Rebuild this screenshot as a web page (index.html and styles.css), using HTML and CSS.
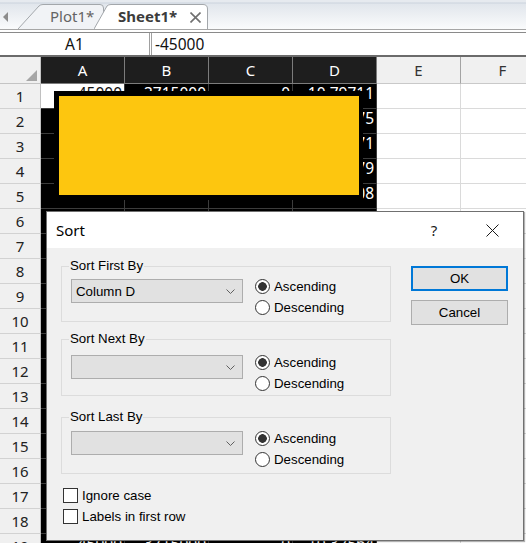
FILE: index.html
```html
<!DOCTYPE html>
<html>
<head>
<meta charset="utf-8">
<link rel="stylesheet" href="styles.css">
</head>
<body>
<div class="app">
  <div class="tabbar">
    <svg class="tab-arrow" width="18" height="25" viewBox="0 0 18 25"><polygon points="8,8 3,13 8,18" fill="#8c8c8c"/></svg>
    <div class="tab tab-plot">
      <svg class="tab-shape" width="86" height="25" viewBox="0 0 86 25"><path d="M0,25 L21,2 Q22.5,0.5 25,0.5 L82,0.5 Q85.5,0.5 85.5,4 L85.5,25" fill="#f1f3f6" stroke="#a3a7ab" stroke-width="1"/></svg>
      <span class="tab-label">Plot1*</span>
    </div>
    <div class="tab tab-sheet">
      <svg class="tab-shape" width="114" height="25" viewBox="0 0 114 25"><path d="M0,25 L13,2 Q14.5,0.5 17,0.5 L109,0.5 Q113.5,0.5 113.5,5 L113.5,25" fill="#ffffff" stroke="#a3a7ab" stroke-width="1"/></svg>
      <span class="tab-label">Sheet1*</span>
      <svg class="tab-close" width="11" height="11" viewBox="0 0 11 11"><path d="M0.5,0.5 L10.5,10.5 M10.5,0.5 L0.5,10.5" stroke="#707070" stroke-width="1.6"/></svg>
    </div>
  </div>
  <div class="tabsep"></div>
  <div class="formula">
    <div class="namebox">A1</div>
    <div class="fx">-45000</div>
  </div>
  <div class="sheet">
    <div class="corner"><svg width="11" height="11" viewBox="0 0 11 11"><polygon points="11,0 11,11 0,11" fill="#a6a6a6"/></svg></div>
    <div class="hd hd-sel">A</div><div class="hd hd-sel">B</div><div class="hd hd-sel">C</div><div class="hd hd-sel">D</div><div class="hd hd-plain">E</div><div class="hd hd-plain">F</div>

    <div class="rh">1</div><div class="c a1">-45000</div><div class="c">3715000</div><div class="c">0</div><div class="c">10.79711</div><div class="w"></div><div class="w"></div>
    <div class="rh">2</div><div class="c">-45000</div><div class="c">3715000</div><div class="c">0</div><div class="c">10.76875</div><div class="w"></div><div class="w"></div>
    <div class="rh">3</div><div class="c">-45000</div><div class="c">3715000</div><div class="c">0</div><div class="c">10.74171</div><div class="w"></div><div class="w"></div>
    <div class="rh">4</div><div class="c">-45000</div><div class="c">3715000</div><div class="c">0</div><div class="c">10.71279</div><div class="w"></div><div class="w"></div>
    <div class="rh">5</div><div class="c">-45000</div><div class="c">3715000</div><div class="c">0</div><div class="c">10.68408</div><div class="w"></div><div class="w"></div>
    <div class="rh">6</div><div class="c">-45000</div><div class="c">3715000</div><div class="c">0</div><div class="c">10.65529</div><div class="w"></div><div class="w"></div>
    <div class="rh">7</div><div class="c">-45000</div><div class="c">3715000</div><div class="c">0</div><div class="c">10.62683</div><div class="w"></div><div class="w"></div>
    <div class="rh">8</div><div class="c">-45000</div><div class="c">3715000</div><div class="c">0</div><div class="c">10.59792</div><div class="w"></div><div class="w"></div>
    <div class="rh">9</div><div class="c">-45000</div><div class="c">3715000</div><div class="c">0</div><div class="c">10.56954</div><div class="w"></div><div class="w"></div>
    <div class="rh">10</div><div class="c">-45000</div><div class="c">3715000</div><div class="c">0</div><div class="c">10.54061</div><div class="w"></div><div class="w"></div>
    <div class="rh">11</div><div class="c">-45000</div><div class="c">3715000</div><div class="c">0</div><div class="c">10.51217</div><div class="w"></div><div class="w"></div>
    <div class="rh">12</div><div class="c">-45000</div><div class="c">3715000</div><div class="c">0</div><div class="c">10.48338</div><div class="w"></div><div class="w"></div>
    <div class="rh">13</div><div class="c">-45000</div><div class="c">3715000</div><div class="c">0</div><div class="c">10.45462</div><div class="w"></div><div class="w"></div>
    <div class="rh">14</div><div class="c">-45000</div><div class="c">3715000</div><div class="c">0</div><div class="c">10.42581</div><div class="w"></div><div class="w"></div>
    <div class="rh">15</div><div class="c">-45000</div><div class="c">3715000</div><div class="c">0</div><div class="c">10.39717</div><div class="w"></div><div class="w"></div>
    <div class="rh">16</div><div class="c">-45000</div><div class="c">3715000</div><div class="c">0</div><div class="c">10.36824</div><div class="w"></div><div class="w"></div>
    <div class="rh">17</div><div class="c">-45000</div><div class="c">3715000</div><div class="c">0</div><div class="c">10.35412</div><div class="w"></div><div class="w"></div>
    <div class="rh">18</div><div class="c">-45000</div><div class="c">3715000</div><div class="c">0</div><div class="c">10.33987</div><div class="w"></div><div class="w"></div>
    <div class="rh">19</div><div class="c">-45000</div><div class="c">3715000</div><div class="c">0</div><div class="c">10.32564</div><div class="w"></div><div class="w"></div>
  </div>

  <div class="redact"></div>

  <div class="dialog">
    <div class="dlg-title">
      <span class="dlg-caption">Sort</span>
      <span class="dlg-help">?</span>
      <svg class="dlg-close" width="13" height="13" viewBox="0 0 13 13"><path d="M0.5,0.5 L12.5,12.5 M12.5,0.5 L0.5,12.5" stroke="#1a1a1a" stroke-width="1"/></svg>
    </div>
    <div class="dlg-body">
      <div class="dlg-main">
        <div class="group g1">
          <span class="group-label">Sort First By</span>
          <div class="combo"><span class="combo-text">Column D</span><svg class="chev" width="9" height="5" viewBox="0 0 9 5"><path d="M0.5,0.5 L4.5,4.5 L8.5,0.5" fill="none" stroke="#606060" stroke-width="1"/></svg></div>
          <div class="radios">
            <div class="radio-row"><span class="radio checked"></span>Ascending</div>
            <div class="radio-row"><span class="radio"></span>Descending</div>
          </div>
        </div>
        <div class="group g2">
          <span class="group-label">Sort Next By</span>
          <div class="combo"><span class="combo-text"></span><svg class="chev" width="9" height="5" viewBox="0 0 9 5"><path d="M0.5,0.5 L4.5,4.5 L8.5,0.5" fill="none" stroke="#606060" stroke-width="1"/></svg></div>
          <div class="radios">
            <div class="radio-row"><span class="radio checked"></span>Ascending</div>
            <div class="radio-row"><span class="radio"></span>Descending</div>
          </div>
        </div>
        <div class="group g3">
          <span class="group-label">Sort Last By</span>
          <div class="combo"><span class="combo-text"></span><svg class="chev" width="9" height="5" viewBox="0 0 9 5"><path d="M0.5,0.5 L4.5,4.5 L8.5,0.5" fill="none" stroke="#606060" stroke-width="1"/></svg></div>
          <div class="radios">
            <div class="radio-row"><span class="radio checked"></span>Ascending</div>
            <div class="radio-row"><span class="radio"></span>Descending</div>
          </div>
        </div>
        <div class="checks">
          <div class="check-row"><span class="checkbox"></span>Ignore case</div>
          <div class="check-row"><span class="checkbox"></span>Labels in first row</div>
        </div>
      </div>
      <div class="dlg-buttons">
        <div class="btn btn-default">OK</div>
        <div class="btn">Cancel</div>
      </div>
    </div>
  </div>
</div>
</body>
</html>
```

FILE: styles.css
```css
* { box-sizing: border-box; }
html, body { margin: 0; padding: 0; }
body {
  width: 526px;
  height: 543px;
  overflow: hidden;
  background: #fff;
  font-family: "Noto Sans", "Liberation Sans", sans-serif;
}
.app {
  position: relative;
  width: 526px;
  height: 543px;
  overflow: hidden;
}

/* ---------- tab bar ---------- */
.tabbar {
  height: 30px;
  display: flex;
  align-items: flex-end;
  border-bottom: 1px solid #a6a6a6;
  background: linear-gradient(#e6eaef 0, #e6eaef 2px, #cbd3dd 3px, #e1e6ec 4px, #fafbfc 100%);
}
.tab-arrow { flex: none; display: block; }
.tab {
  position: relative;
  height: 25px;
  display: flex;
  align-items: center;
  flex: none;
}
.tab-shape {
  position: absolute;
  left: 0;
  top: 0;
  display: block;
}
.tab-label {
  position: relative;
  font-size: 15px;
  line-height: 25px;
}
.tab-plot { width: 86px; padding-left: 32px; }
.tab-plot .tab-label { color: #646464; }
.tab-sheet { width: 114px; margin-left: -10px; padding-left: 24px; }
.tab-sheet .tab-label { color: #3c3c3c; font-weight: bold; }
.tab-close { position: relative; margin-left: auto; margin-right: 7px; margin-top: 2px; display: block; }

.tabsep {
  height: 3px;
  background: #fff;
  border-bottom: 1px solid #8a8a8a;
}

/* ---------- formula bar ---------- */
.formula {
  height: 22px;
  display: flex;
  font-size: 15.5px;
  color: #111;
}
.namebox {
  width: 150px;
  border-right: 1px solid #a0a0a0;
  text-align: center;
  line-height: 22px;
}
.fx {
  flex: 1;
  margin-left: 1px;
  border-left: 1px solid #a0a0a0;
  padding-left: 3px;
  line-height: 22px;
}

/* ---------- sheet grid ---------- */
.sheet {
  height: 488px;
  overflow: hidden;
  border-top: 2px solid #6b6b6b;
  display: grid;
  grid-template-columns: 41px repeat(6, 84px);
  grid-template-rows: 27px;
  grid-auto-rows: 25px;
}
.corner {
  background: #f0f0f0;
  border-right: 1px solid #c4c4c4;
  border-bottom: 1px solid #c4c4c4;
  display: flex;
  justify-content: flex-end;
  align-items: flex-end;
  padding: 0 3px 2px 0;
}
.corner svg { display: block; }
.hd {
  font-size: 15px;
  line-height: 26px;
  text-align: center;
  border-right: 1px solid;
  border-bottom: 1px solid;
}
.hd-sel { background: #1e1e1e; color: #fff; border-color: #7c7c7c; }
.hd-plain { background: #f0f0f0; color: #333; border-right-color: #a3a3a3; border-bottom-color: #c9c9c9; }
.rh {
  background: #f0f0f0;
  color: #222;
  font-size: 15px;
  line-height: 24px;
  text-align: center;
  border-right: 1px solid #c0c0c0;
  border-bottom: 1px solid #d2d2d2;
}
.c {
  background: #000;
  color: #fff;
  font-size: 15.5px;
  line-height: 19px;
  text-align: right;
  padding-right: 2px;
  white-space: nowrap;
  border-right: 1px solid #3c3c3c;
  border-bottom: 1px solid #3c3c3c;
}
.c.a1 { background: #fff; color: #111; }
.w {
  background: #fff;
  border-right: 1px solid #dadada;
  border-bottom: 1px solid #dadada;
}

/* ---------- redaction box over the data ---------- */
.redact {
  position: absolute;
  left: 54px;
  top: 91px;
  width: 309px;
  height: 109px;
  background: #fdc60f;
  border: 5px solid #000;
  border-right-width: 4px;
}

/* ---------- dialog ---------- */
.dialog {
  position: absolute;
  left: 46px;
  top: 211px;
  width: 478px;
  height: 330px;
  border: 1px solid #707070;
  box-shadow: 1px 1px 1px rgba(0, 0, 0, 0.3);
  background: #f0f0f0;
  font-family: "Liberation Sans", Arial, sans-serif;
  font-size: 13.3px;
  color: #000;
}
.dlg-title {
  height: 36px;
  background: #fff;
  display: flex;
  align-items: center;
  padding: 0 24px 0 9px;
}
.dlg-caption {
  flex: 1;
  font-family: "Noto Sans", sans-serif;
  font-size: 15px;
  color: #000;
}
.dlg-help {
  width: 20px;
  margin-right: 42px;
  text-align: center;
  font-family: "Noto Sans", sans-serif;
  font-size: 15px;
  color: #1a1a1a;
}
.dlg-close { display: block; }

.dlg-body {
  display: flex;
  gap: 20px;
  padding: 18px 15px 0 14px;
}
.dlg-main { width: 330px; }

.group {
  position: relative;
  border: 1px solid #dcdcdc;
  display: flex;
  align-items: flex-start;
  padding-left: 9px;
}
.g1 { height: 56px; padding-top: 9px; }
.g2 { height: 57px; padding-top: 12px; margin-top: 17px; }
.g3 { height: 57px; padding-top: 10px; margin-top: 21px; }
.group-label {
  position: absolute;
  left: 7px;
  top: -9px;
  padding: 0 1px;
  line-height: 16px;
  background: #f0f0f0;
}

.combo {
  width: 172px;
  height: 24px;
  margin-top: 3px;
  background: #e1e1e1;
  border: 1px solid #adadad;
  display: flex;
  align-items: center;
  padding: 0 7px 0 4px;
}
.combo-text { flex: 1; }
.chev { display: block; margin-top: 1px; }

.radios {
  margin-left: 12px;
  display: flex;
  flex-direction: column;
  gap: 1px;
}
.radio-row {
  height: 20px;
  display: flex;
  align-items: center;
  gap: 4px;
}
.radio {
  width: 15px;
  height: 15px;
  border-radius: 50%;
  border: 1px solid #333;
  background: #fff;
}
.radio.checked {
  background: radial-gradient(circle, #333 0, #333 4px, #fff 4.6px);
}

.checks {
  margin-top: 13px;
  padding-left: 2px;
  display: flex;
  flex-direction: column;
  gap: 5px;
}
.check-row {
  height: 16px;
  display: flex;
  align-items: center;
  gap: 4px;
}
.checkbox {
  width: 15px;
  height: 15px;
  border: 1px solid #333;
  background: #fff;
}

.dlg-buttons {
  width: 97px;
  display: flex;
  flex-direction: column;
  gap: 9px;
}
.btn {
  height: 25px;
  background: #e1e1e1;
  border: 1px solid #adadad;
  display: flex;
  align-items: center;
  justify-content: center;
}
.btn-default { border: 2px solid #0078d7; }
```
